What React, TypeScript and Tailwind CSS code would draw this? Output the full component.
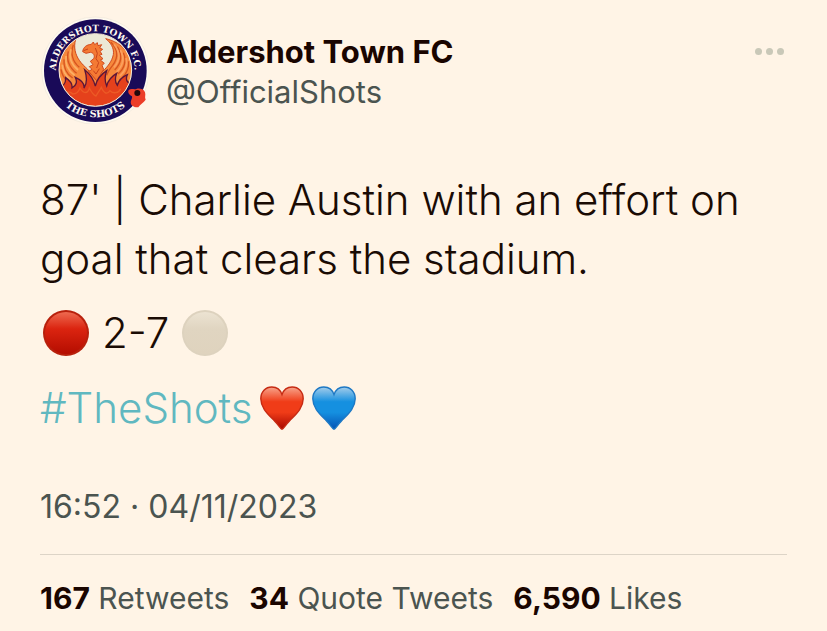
import type { ReactNode } from "react";

function Crest() {
  return (
    <svg viewBox="12 12 324 324" className="size-27 shrink-0" role="img" aria-label="Aldershot Town FC crest">
      <defs>
        <path id="arc-top" d="M60 212 A118 118 0 0 1 60 176 A118 118 0 0 1 296 176 A118 118 0 0 1 296 212" />
        <path id="arc-bottom" d="M38 176 A140 140 0 0 0 318 176" />
        <clipPath id="disc">
          <circle cx="178" cy="174" r="108" />
        </clipPath>
      </defs>
      <circle cx="178" cy="176" r="161" fill="#fffaf0" stroke="#efe6d8" strokeWidth="2" />
      <circle cx="178" cy="176" r="154" fill="#190a58" />
      <circle cx="178" cy="174" r="109" fill="#ece8d6" />
      <g clipPath="url(#disc)">
        <path
          d="M119 82 C112 106 118 128 130 145 C137 156 146 163 154 171 L178 200 L200 178 C214 165 228 148 232 128 C235 108 224 92 209 80 C262 92 292 132 290 180 L290 240 L66 240 L66 176 C68 140 92 100 119 82Z"
          fill="#f7893c"
          stroke="#cf4a1e"
          strokeWidth="3"
        />
        <path
          d="M140 119 C142 105 152 98 166 97 L172 90 L176 98 L184 92 L186 101 L197 98 L191 108 L200 112 L192 118 L198 127 L190 130 L201 140 L193 144 L205 154 L198 160 L203 172 L182 206 L158 178 L168 172 L160 164 L171 158 L163 148 L173 140 C178 130 172 122 163 121 L150 124 Z"
          fill="#f47a34"
          stroke="#cf4a1e"
          strokeWidth="3"
        />
        <path d="M143 116 L156 111 M178 108 L184 124 L180 140 L188 152 L182 168 M172 176 L180 186 L190 170" fill="none" stroke="#c8431b" strokeWidth="3" />
        <path
          d="M112 98 C103 124 110 148 130 166 M97 118 C90 142 100 168 122 184 M84 142 C82 166 92 186 110 198 M75 172 C78 188 84 198 92 206"
          fill="none"
          stroke="#d65420"
          strokeWidth="4"
        />
        <path
          d="M105 112 C98 136 106 158 126 174 M90 132 C87 156 96 176 116 190 M79 158 C80 176 88 190 102 202"
          fill="none"
          stroke="#fcb066"
          strokeWidth="5"
        />
        <path
          d="M224 90 C246 112 248 136 230 160 C222 170 216 178 212 190 M244 104 C260 130 256 154 236 174 M262 122 C272 146 266 168 246 186 M277 148 C280 168 272 184 258 198"
          fill="none"
          stroke="#d65420"
          strokeWidth="4"
        />
        <path
          d="M234 97 C254 122 252 146 234 166 M253 114 C266 138 262 160 242 180 M270 138 C276 158 268 176 252 192"
          fill="none"
          stroke="#fba060"
          strokeWidth="5"
        />
        <path
          d="M66 226 C82 224 90 212 89 197 C102 206 110 216 108 228 C122 221 124 208 118 196 C136 204 146 216 144 228 C154 214 152 192 146 173 C162 186 174 206 178 222 C182 204 194 188 212 176 C206 192 206 208 212 222 C216 206 228 192 242 184 C236 200 238 212 244 220 C248 204 260 194 274 188 C268 202 272 214 290 216 L290 290 L66 290Z"
          fill="#e5411c"
          stroke="#5b1639"
          strokeWidth="4"
        />
        <path
          d="M84 240 C98 240 104 238 110 246 C124 246 130 234 132 228 C142 246 156 246 160 228 C166 240 174 250 180 252 C186 240 192 234 196 226 C204 246 214 248 222 236 C232 246 248 244 254 230"
          fill="none"
          stroke="#ec5a26"
          strokeWidth="4"
        />
      </g>
      <circle cx="178" cy="174" r="109" fill="none" stroke="#f7ead4" strokeWidth="3" />
      <text fill="#fffaf0" fontSize="27" fontWeight="700" fontFamily="'DejaVu Serif', serif" textAnchor="middle">
        <textPath href="#arc-top" startOffset="50%">ALDERSHOT TOWN F.C.</textPath>
      </text>
      <text fill="#fffaf0" fontSize="29" fontWeight="700" fontFamily="'DejaVu Serif', serif" textAnchor="middle">
        <textPath href="#arc-bottom" startOffset="50%">THE SHOTS</textPath>
      </text>
      <path
        d="M278 234 C286 228 294 234 301 231 C309 228 323 230 327 241 C330 250 325 256 329 263 C323 272 313 276 307 286 C297 286 287 283 285 276 C282 267 290 260 288 253 C281 249 274 243 278 234Z"
        fill="#ec3d28"
      />
      <circle cx="304" cy="243" r="9" fill="#22090d" />
    </svg>
  );
}

type BallProps = { id: string; label: string; top: string; upper: string; lower: string; rim: string };

function Ball({ id, label, top, upper, lower, rim }: BallProps) {
  return (
    <svg viewBox="0 0 48 48" className="size-12 shrink-0" role="img" aria-label={label}>
      <defs>
        <linearGradient id={id} x1="0" y1="0" x2="0" y2="1">
          <stop offset="0" stopColor={top} />
          <stop offset="0.4" stopColor={upper} />
          <stop offset="1" stopColor={lower} />
        </linearGradient>
      </defs>
      <circle cx="24" cy="24" r="23" fill={rim} />
      <circle cx="24" cy="24" r="21" fill={`url(#${id})`} />
    </svg>
  );
}

type HeartProps = { id: string; label: string; light: string; mid: string; dark: string; rim: string };

function Heart({ id, label, light, mid, dark, rim }: HeartProps) {
  return (
    <svg viewBox="0 0 44 44" className="size-11 shrink-0" role="img" aria-label={label}>
      <defs>
        <linearGradient id={id} x1="0" y1="0" x2="0" y2="1">
          <stop offset="0" stopColor={light} />
          <stop offset="0.35" stopColor={mid} />
          <stop offset="0.6" stopColor={mid} />
          <stop offset="1" stopColor={dark} />
        </linearGradient>
      </defs>
      <path
        d="M22 43.2 C20.6 43.2 19.5 40 15 35.5 C9 29 .8 22.5 .8 12.8 C.8 5.8 5.6 1 11.8 1 C16.6 1 20.5 4 22 8.6 C23.5 4 27.4 1 32.2 1 C38.4 1 43.2 5.8 43.2 12.8 C43.2 22.5 35 29 29 35.5 C24.5 40 23.4 43.2 22 43.2Z"
        fill={`url(#${id})`}
        stroke={rim}
        strokeWidth="1.4"
      />
    </svg>
  );
}

function Stat({ value, children }: { value: string; children: ReactNode }) {
  return (
    <a href="#stats" className="whitespace-nowrap">
      <strong className="font-bold text-[#1a0500]">{value}</strong> {children}
    </a>
  );
}

export default function App() {
  return (
    <article className="min-h-screen bg-[#fff4e6] px-10 pt-4 pb-3 font-['Inter','Liberation_Sans',sans-serif] text-[#1a0b04]">
      <header className="flex items-start gap-[18px]">
        <Crest />
        <div className="grow pt-4">
          <h1 className="text-[31px] leading-10 font-bold text-[#1a0500]">Aldershot Town FC</h1>
          <a href="#profile" className="block text-[31px] leading-10 font-normal text-[#4b5450]">
            @OfficialShots
          </a>
        </div>
        <button type="button" aria-label="More" className="mt-[27px] mr-[3px] flex h-4 items-center gap-1">
          <span className="size-[7px] rounded-full bg-[#c9c8b8]" />
          <span className="size-[7px] rounded-full bg-[#c9c8b8]" />
          <span className="size-[7px] rounded-full bg-[#c9c8b8]" />
        </button>
      </header>

      <div className="mt-[46px] text-[42px] font-light">
        <p className="leading-[59px]">87' | Charlie Austin with an effort on goal that clears the stadium.</p>
        <p className="mt-[7px] flex h-[75px] items-center gap-3 pl-0.5">
          <Ball id="red-ball" label="Red circle" top="#ee6a50" upper="#db2410" lower="#b40d00" rim="#b8200c" />
          <span>2-7</span>
          <Ball id="white-ball" label="White circle" top="#ece3d2" upper="#e0d5c1" lower="#dfd3be" rim="#ddd2be" />
        </p>
        <p className="flex h-[75px] items-center">
          <a href="#theshots" className="text-[#60b8c0]">
            #TheShots
          </a>
          <span className="ml-2 flex gap-2">
            <Heart id="red-heart" label="Red heart" light="#f7a58c" mid="#f03c18" dark="#a80800" rim="#c62a12" />
            <Heart id="blue-heart" label="Blue heart" light="#a5cdea" mid="#1590e0" dark="#0553b4" rim="#1d78c4" />
          </span>
        </p>
      </div>

      <time className="mt-[42px] block text-[32px] leading-10 font-normal text-[#4b5450]">16:52 · 04/11/2023</time>

      <footer className="mt-[27px] flex flex-wrap gap-x-5 border-t border-[#ddd4c7] pt-[23px] text-[30px] leading-10 font-normal text-[#4b5450]">
        <Stat value="167">Retweets</Stat>
        <Stat value="34">Quote Tweets</Stat>
        <Stat value="6,590">Likes</Stat>
      </footer>
    </article>
  );
}
